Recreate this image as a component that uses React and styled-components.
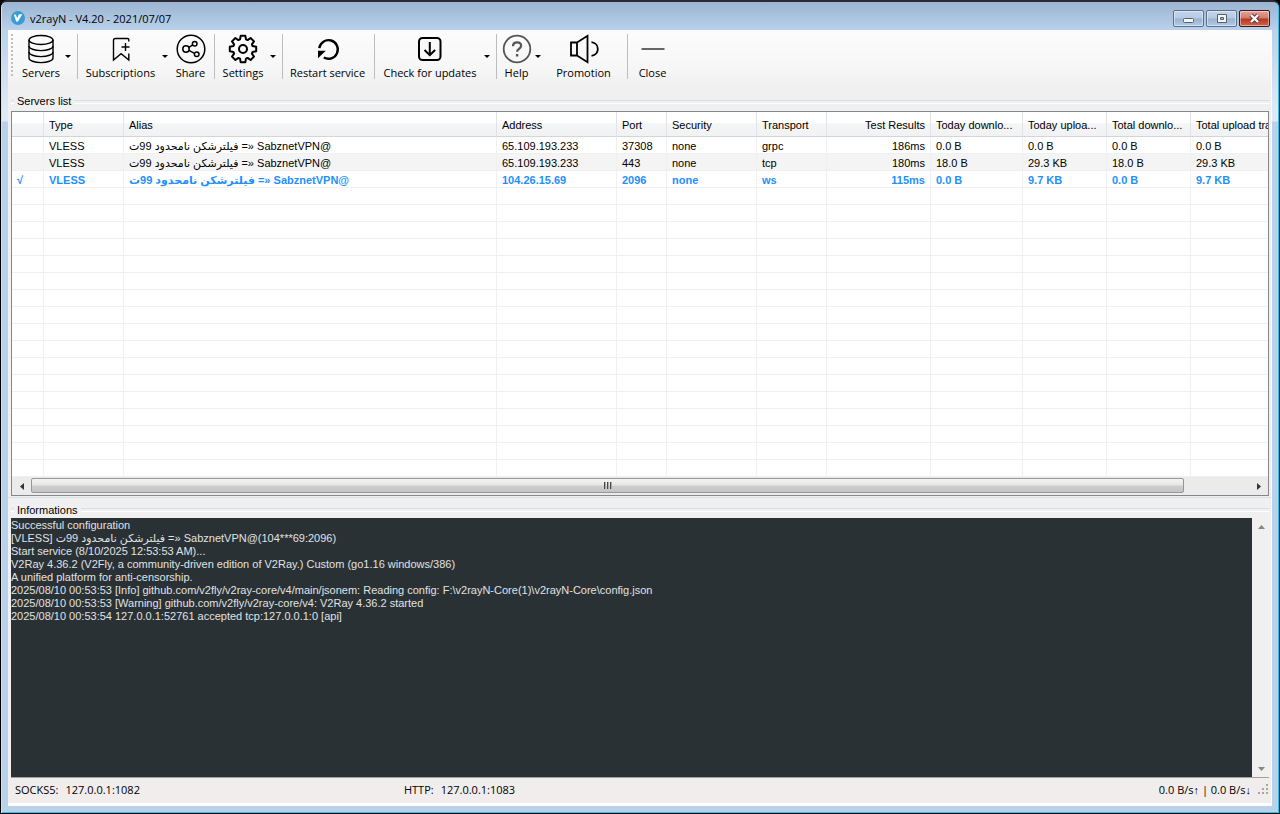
import React, { useState } from "react";
import styled, { createGlobalStyle, css } from "styled-components";

const GlobalStyle = createGlobalStyle`
    * {
        box-sizing: border-box;
    }
    body {
        margin: 0;
        background-color: #000;
    }
    button, textarea {
        margin: 0;
        padding: 0;
        border: none;
        background: none;
        color: inherit;
        font: inherit;
    }
`

const uiFont = `"Open Sans", "Noto Sans", sans-serif`;
const listFont = `"Liberation Sans", "DejaVu Sans", sans-serif`;

// window frame
const Frame = styled.div`
    display: flex;
    flex-direction: column;
    height: 100vh;
    min-height: 480px;
    padding: 0 7px 7px 6px;
    border: 1px solid #000;
    border-right-color: #101c24;
    border-top: 2px solid #2b2a33;
    border-radius: 7px 7px 0 0;
    background: linear-gradient(180deg, #9ab4d2 0px, #b9d1ea 28px, #dfeaf6 110px, #dfeaf6 119px, #b9d1ea 120px);
    box-shadow: inset 1px 0 0 #cfe0f2, inset -1px -1px 0 #26c6ea;
    font-family: ${listFont};
    font-size: 11px;
    color: #000;
`
const TitleBar = styled.header`
    display: flex;
    align-items: center;
    height: 28px;
    flex: none;
    padding: 4px 2px 0 4px;
`
const Title = styled.h1`
    flex: 1;
    margin: 0 0 0 5px;
    font-family: ${uiFont};
    font-size: 11px;
    font-weight: 400;
`
const WindowButtons = styled.div`
    display: flex;
    gap: 2px;
`
const WindowButton = styled.button`
    display: flex;
    align-items: center;
    justify-content: center;
    width: 31px;
    height: 17px;
    border: 1px solid ${props => props.$close ? "#45121a" : "#5b6f8a"};
    border-radius: 2px;
    background: ${props => props.$close
        ? "linear-gradient(180deg, #e3a497 0%, #d3796a 48%, #b8351d 52%, #cc6650 100%)"
        : "linear-gradient(180deg, #c3d5e9 0%, #b5cae2 48%, #98b2d0 52%, #b2cae4 100%)"};
    box-shadow: inset 0 0 0 1px rgba(255, 255, 255, 0.45);
`

// everything inside the frame
const Client = styled.main`
    display: flex;
    flex-direction: column;
    flex: 1;
    min-height: 0;
    margin: 0 0 0 1px;
    border: 1px solid #fbfdff;
    border-top: none;
    border-left: none;
    background-color: #f0f0f0;
`
const Toolbar = styled.nav`
    display: flex;
    align-items: flex-start;
    flex: none;
    height: 65px;
    padding: 4px 0 0 3px;
    background: linear-gradient(180deg, #fcfcfc 0px, #f6f6f6 40px, #f0f0f0 56px);
    font-family: ${uiFont};
    font-size: 11px;
    line-height: 16px;
`
const Grip = styled.div`
    width: 2px;
    height: 43px;
    margin-right: 6px;
    background: repeating-linear-gradient(180deg, #c0c0c0 0px, #c0c0c0 2px, transparent 2px, transparent 4px);
`
const Separator = styled.div`
    width: 1px;
    height: 45px;
    margin: 0 3px 0 5px;
    background-color: #bdbdbd;
`
const ToolButton = styled.button`
    display: flex;
    flex-direction: column;
    align-items: center;
    gap: 1px;
    width: ${props => props.$width}px;
    margin-left: ${props => props.$spaced ? "3px" : "0"};
    white-space: nowrap;

    svg {
        display: block;
        flex: none;
    }
`
const DropButton = styled.button`
    width: 9px;
    height: 45px;
    padding-left: 2px;

    &::after {
        content: "";
        display: block;
        width: 0;
        border: 3px solid transparent;
        border-top-color: #000;
        border-bottom: none;
    }
`

const Group = styled.section`
    display: flex;
    flex-direction: column;
    flex: ${props => props.$grow} 1 0px;
    min-height: 0;
    padding: 0 2px 0 3px;
`
const ServersGroup = styled(Group)`
    margin-bottom: 5px;
    padding-bottom: 1px;
    border-bottom: 1px solid #d5dfe5;
`
const GroupTitle = styled.h2`
    display: flex;
    align-items: center;
    gap: 3px;
    flex: none;
    height: ${props => props.$tall ? "16px" : "15px"};
    margin: 0;
    padding-bottom: ${props => props.$tall ? "3px" : "1px"};
    font-size: 11px;
    font-weight: 400;
    line-height: 13px;

    &::before, &::after {
        content: "";
        height: 2px;
        border-top: 1px solid #d5dfe5;
        border-bottom: 1px solid #fff;
    }
    &::before {
        width: 3px;
    }
    &::after {
        flex: 1;
    }
`

const ListBox = styled.div`
    display: flex;
    flex-direction: column;
    flex: 1;
    min-height: 0;
    border: 1px solid #828790;
    background-color: #fff;
`
const TableView = styled.div`
    flex: 1;
    min-height: 0;
    overflow: hidden;
`
const Table = styled.table`
    width: 100%;
    border-collapse: separate;
    border-spacing: 0;
    table-layout: fixed;
`
const cellBase = css`
    padding: 2px 5px 0 5px;
    overflow: hidden;
    text-align: ${props => props.$right ? "right" : "left"};
    white-space: nowrap;
`
const HeadCell = styled.th`
    ${cellBase}
    width: ${props => props.$width ? props.$width + "px" : "auto"};
    height: 25px;
    border-right: 1px solid #e2e3e6;
    border-bottom: 1px solid #d5d5d5;
    background: linear-gradient(180deg, #fff 0%, #fff 45%, #f4f5f7 50%, #f1f2f4 100%);
    font-weight: 400;

    &:last-child {
        padding-right: 0;
        border-right: none;
    }
`
const Row = styled.tr`
    background-color: ${props => props.$shaded ? "#f4f4f4" : "#fff"};
    color: ${props => props.$active ? "#1e90ff" : "#000"};
    font-weight: ${props => props.$active ? 700 : 400};
`
const Cell = styled.td`
    ${cellBase}
    height: 17px;
    line-height: 14px;
    border-right: 1px solid #f0f0f0;
    border-bottom: 1px solid #f0f0f0;

    &:last-child {
        border-right: none;
    }
`

const HScroll = styled.div`
    display: flex;
    flex: none;
    height: 18px;
    padding: 1px 0;
    background-color: #ebebeb;
`
const ArrowButton = styled.button`
    display: flex;
    align-items: center;
    justify-content: center;
    width: ${props => props.$vertical ? "16px" : "19px"};
    height: ${props => props.$vertical ? "17px" : "auto"};
`
const Track = styled.div`
    flex: 1;
    padding-right: 65px;
`
const Thumb = styled.div`
    display: flex;
    align-items: center;
    justify-content: center;
    gap: 1px;
    height: 15px;
    border: 1px solid #979797;
    border-radius: 2px;
    background: linear-gradient(180deg, #f4f4f4 0%, #e6e6e6 48%, #cfcfcf 52%, #c4c4c4 100%);
`
const ThumbLine = styled.span`
    width: 2px;
    height: 7px;
    border-left: 1px solid #4a4a4a;
    background-color: #aaa;
`

const LogArea = styled.div`
    display: flex;
    flex: 1;
    min-height: 0;
    border-bottom: 1px solid #a0a0a0;
`
const LogText = styled.textarea`
    flex: 1;
    min-width: 0;
    padding-top: 1px;
    border-radius: 0;
    outline: none;
    resize: none;
    overflow: hidden;
    background-color: #293134;
    color: #e0e2e4;
    font-family: ${listFont};
    font-size: 11px;
    line-height: 13px;
`
const VScroll = styled.div`
    display: flex;
    flex-direction: column;
    justify-content: space-between;
    width: 16px;
    margin-left: 1px;
    background-color: #f0f0f0;
`

const StatusBar = styled.footer`
    display: flex;
    align-items: center;
    flex: none;
    height: 27px;
    padding: 0 2px 2px 7px;
    border-bottom: 2px solid #fff;
    background-color: #f0edec;
    font-family: ${uiFont};
    font-size: 11px;
`
const StatusItem = styled.div`
    display: flex;
    gap: 7px;
    flex: ${props => props.$grow} 1 0px;
    white-space: nowrap;
`
const Speed = styled.span`
    margin-right: 7px;
    white-space: nowrap;
`

// toolbar icons, all on a 30px canvas
const Icon = ({ children, width = 1.5, color = "#000" }) => (
    <svg width="30" height="30" viewBox="0 0 30 30" fill="none" stroke={color} strokeWidth={width} aria-hidden="true">
        {children}
    </svg>
);

const ServersIcon = () => (
    <Icon width={1.4}>
        <ellipse cx="15" cy="6" rx="12" ry="4.5" />
        <path d="M3 6v18c0 2.6 5.4 4.6 12 4.6s12-2 12-4.6V6" />
        <path d="M3 12c0 2.6 5.4 4.6 12 4.6s12-2 12-4.6M3 18c0 2.6 5.4 4.6 12 4.6s12-2 12-4.6" />
    </Icon>
);
const SubscriptionsIcon = () => (
    <Icon width={1.4}>
        <path d="M22.8 7.5V5.8c0-.8-.5-1.300-1.300-1.300H9.500c-1.300 0-2 .8-2 2V26l7.600-6.300 7.700 6.300v-6.500" />
        <path d="M19.500 9v8M15.500 13h8" />
    </Icon>
);
const ShareIcon = () => (
    <Icon width={1.5}>
        <circle cx="15" cy="15" r="13.8" />
        <circle cx="10" cy="15" r="3.2" />
        <circle cx="18.7" cy="9.8" r="2.3" />
        <circle cx="20.7" cy="20.3" r="2.3" />
        <path d="M12.8 13.4l4-2.500M12.9 16.4l5.600 2.900" />
    </Icon>
);
const SettingsIcon = () => (
    <Icon width={2}>
        <path
            strokeLinejoin="round"
            d="M12.7 1.800H17.3L18 5.400 19.600 6.100 22.600 4 26 7.400 23.900 10.400 24.600 12 28.200 12.700V17.300L24.600 18 23.900 19.600 26 22.600 22.600 26 19.600 23.900 18 24.600 17.300 28.200H12.700L12 24.600 10.400 23.900 7.400 26 4 22.600 6.100 19.600 5.400 18 1.800 17.300V12.700L5.400 12 6.100 10.400 4 7.400 7.400 4 10.400 6.100 12 5.400z"
        />
        <circle cx="15" cy="15" r="4" />
    </Icon>
);
const RestartIcon = () => (
    <Icon width={2.4}>
        <path d="M6.300 14.200A9.300 9.300 0 1 1 10.800 23.500" />
        <path d="M5 16.800h7.800L5 24.300z" fill="#000" stroke="none" />
    </Icon>
);
const UpdateIcon = () => (
    <Icon width={2}>
        <rect x="4" y="4" width="21.5" height="22" rx="3.5" />
        <path d="M14.800 8v13M9.500 16l5.300 5.200 5.300-5.200" />
    </Icon>
);
const HelpIcon = () => (
    <Icon width={1.8} color="#555">
        <circle cx="15" cy="15" r="13.3" />
        <path strokeWidth="2.2" d="M11 12.300c0-2.500 1.700-4 4.100-4s4 1.400 4 3.500c0 3-4 3.200-4 6" />
        <path strokeWidth="2.4" d="M15.100 20v2.500" />
    </Icon>
);
const PromotionIcon = () => (
    <Icon width={1.8}>
        <path d="M8 8.500H2v13h6zM8 8.500L18.500 1.800v26.400L8 21.500" />
        <path d="M22.500 8.200c8.400 1.200 8.400 12.400 0 13.600" />
    </Icon>
);
const CloseIcon = () => (
    <Icon color="#333">
        <path d="M3.500 15h23" />
    </Icon>
);

const tools = [
    { name: "Servers", icon: <ServersIcon />, width: 44, drop: true, end: true },
    { name: "Subscriptions", icon: <SubscriptionsIcon />, width: 79, drop: true },
    { name: "Share", icon: <ShareIcon />, width: 37, spaced: true, end: true },
    { name: "Settings", icon: <SettingsIcon />, width: 50, drop: true, end: true },
    { name: "Restart service", icon: <RestartIcon />, width: 83, end: true },
    { name: "Check for updates", icon: <UpdateIcon />, width: 104, drop: true, end: true },
    { name: "Help", icon: <HelpIcon />, width: 33, drop: true },
    { name: "Promotion", icon: <PromotionIcon />, width: 77, spaced: true, end: true },
    { name: "Close", icon: <CloseIcon />, width: 43 },
];

// the alias column takes what is left
const columns = [
    { title: "", width: 32 },
    { title: "Type", width: 80 },
    { title: "Alias" },
    { title: "Address", width: 120 },
    { title: "Port", width: 50 },
    { title: "Security", width: 90 },
    { title: "Transport", width: 70 },
    { title: "Test Results", width: 104, right: true },
    { title: "Today downlo...", width: 92 },
    { title: "Today uploa...", width: 84 },
    { title: "Total downlo...", width: 84 },
    { title: "Total upload tra", width: 77 },
];

const alias = "فیلترشکن نامحدود 99ت =» SabznetVPN@";

const servers = [
    ["", "VLESS", alias, "65.109.193.233", "37308", "none", "grpc", "186ms", "0.0 B", "0.0 B", "0.0 B", "0.0 B"],
    ["", "VLESS", alias, "65.109.193.233", "443", "none", "tcp", "180ms", "18.0 B", "29.3 KB", "18.0 B", "29.3 KB"],
    ["√", "VLESS", alias, "104.26.15.69", "2096", "none", "ws", "115ms", "0.0 B", "9.7 KB", "0.0 B", "9.7 KB"],
];
const emptyRows = Array.from({ length: 17 }, () => columns.map(() => ""));

const logLines = [
    "Successful configuration",
    `[VLESS] ${alias}(104***69:2096)`,
    "Start service (8/10/2025 12:53:53 AM)...",
    "V2Ray 4.36.2 (V2Fly, a community-driven edition of V2Ray.) Custom (go1.16 windows/386)",
    "A unified platform for anti-censorship.",
    "2025/08/10 00:53:53 [Info] github.com/v2fly/v2ray-core/v4/main/jsonem: Reading config: F:\\v2rayN-Core(1)\\v2rayN-Core\\config.json",
    "2025/08/10 00:53:53 [Warning] github.com/v2fly/v2ray-core/v4: V2Ray 4.36.2 started",
    "2025/08/10 00:53:54 127.0.0.1:52761 accepted tcp:127.0.0.1:0 [api]",
];

function App() {
    const [active, setActive] = useState(2);

    return (
        <>
            <GlobalStyle />
            <Frame>
                <TitleBar>
                    <svg width="14" height="14" viewBox="0 0 14 14" aria-hidden="true">
                        <circle cx="7" cy="7" r="7" fill="#3a9bd5" />
                        <path d="M2.800 3.800l2-.4 1.400 3.800 1.600-3.700 3.600-.4-4.500 7.300H5.200z" fill="#fff" />
                    </svg>
                    <Title>v2rayN - V4.20 - 2021/07/07</Title>
                    <WindowButtons>
                        <WindowButton aria-label="Minimize">
                            <svg width="13" height="9" viewBox="0 0 13 9"><rect x="1.5" y="4.5" width="10" height="4" rx="1" fill="#f4f4f4" stroke="#55606e" /></svg>
                        </WindowButton>
                        <WindowButton aria-label="Maximize">
                            <svg width="12" height="9" viewBox="0 0 12 9"><path d="M1.500 .5h9v8h-9zM4.500 3.500v2h3v-2z" fill="#f4f4f4" fillRule="evenodd" stroke="#55606e" /></svg>
                        </WindowButton>
                        <WindowButton $close aria-label="Close window">
                            <svg width="13" height="11" viewBox="0 0 13 11">
                                <path d="M3 2l7 7M10 2L3 9" stroke="#5b3a42" strokeWidth="4.4" />
                                <path d="M3 2l7 7M10 2L3 9" stroke="#f6f6f6" strokeWidth="2.4" />
                            </svg>
                        </WindowButton>
                    </WindowButtons>
                </TitleBar>
                <Client>
                    <Toolbar>
                        <Grip />
                        {tools.map((tool) => (
                            <React.Fragment key={tool.name}>
                                <ToolButton $width={tool.width} $spaced={tool.spaced}>
                                    {tool.icon}
                                    {tool.name}
                                </ToolButton>
                                {tool.drop && <DropButton aria-label={`${tool.name} menu`} />}
                                {tool.end && <Separator />}
                            </React.Fragment>
                        ))}
                    </Toolbar>
                    {/* servers */}
                    <ServersGroup $grow={401}>
                        <GroupTitle $tall>Servers list</GroupTitle>
                        <ListBox>
                            <TableView>
                                <Table>
                                    <thead>
                                        <tr>
                                            {columns.map((col, index) => (
                                                <HeadCell key={index} $width={col.width} $right={col.right}>{col.title}</HeadCell>
                                            ))}
                                        </tr>
                                    </thead>
                                    <tbody>
                                        {[...servers, ...emptyRows].map((row, index) => (
                                            <Row
                                                key={index}
                                                $shaded={index === 1}
                                                $active={index === active}
                                                onDoubleClick={() => index < servers.length && setActive(index)}
                                            >
                                                {row.map((value, col) => (
                                                    <Cell key={col} $right={columns[col].right}>{value}</Cell>
                                                ))}
                                            </Row>
                                        ))}
                                    </tbody>
                                </Table>
                            </TableView>
                            <HScroll>
                                <ArrowButton aria-label="Scroll left">
                                    <svg width="4" height="7" viewBox="0 0 4 7"><path d="M4 0v7L0 3.500z" fill="#333" /></svg>
                                </ArrowButton>
                                <Track>
                                    <Thumb><ThumbLine /><ThumbLine /><ThumbLine /></Thumb>
                                </Track>
                                <ArrowButton aria-label="Scroll right">
                                    <svg width="4" height="7" viewBox="0 0 4 7"><path d="M0 0v7l4-3.500z" fill="#333" /></svg>
                                </ArrowButton>
                            </HScroll>
                        </ListBox>
                    </ServersGroup>
                    {/* log */}
                    <Group $grow={275}>
                        <GroupTitle>Informations</GroupTitle>
                        <LogArea>
                            <LogText readOnly aria-label="Informations" value={logLines.join("\n")} />
                            <VScroll>
                                <ArrowButton $vertical aria-label="Scroll up">
                                    <svg width="7" height="4" viewBox="0 0 7 4"><path d="M0 4h7L3.500 0z" fill="#868686" /></svg>
                                </ArrowButton>
                                <ArrowButton $vertical aria-label="Scroll down">
                                    <svg width="7" height="4" viewBox="0 0 7 4"><path d="M0 0h7L3.500 4z" fill="#868686" /></svg>
                                </ArrowButton>
                            </VScroll>
                        </LogArea>
                    </Group>
                    <StatusBar>
                        <StatusItem $grow={389}>
                            <span>SOCKS5:</span>
                            <span>127.0.0.1:1082</span>
                        </StatusItem>
                        <StatusItem $grow={755}>
                            <span>HTTP:</span>
                            <span>127.0.0.1:1083</span>
                        </StatusItem>
                        <Speed>0.0 B/s↑ | 0.0 B/s↓</Speed>
                        <svg width="11" height="11" viewBox="0 0 11 11" fill="#a8a4a3" aria-hidden="true">
                            <path d="M8 0h2v2H8zM8 4h2v2H8zM4 4h2v2H4zM8 8h2v2H8zM4 8h2v2H4zM0 8h2v2H0z" />
                        </svg>
                    </StatusBar>
                </Client>
            </Frame>
        </>
    );
}

export default App;
